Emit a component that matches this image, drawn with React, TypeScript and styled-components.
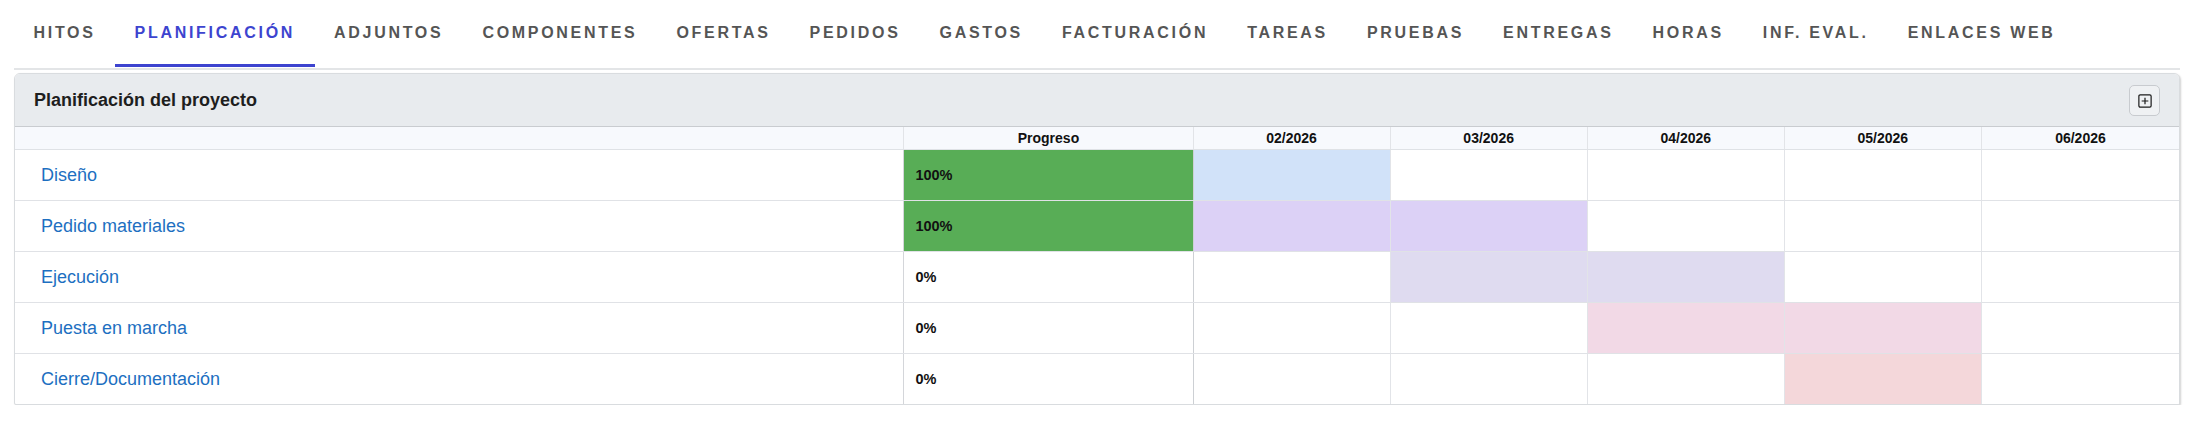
import React from "react";
import styled, { createGlobalStyle } from "styled-components";

const GlobalStyle = createGlobalStyle`
  *, *::before, *::after {
    box-sizing: border-box;
  }
  html, body {
    margin: 0;
    padding: 0;
    background: #ffffff;
    font-family: "Liberation Sans", Arial, sans-serif;
  }
`;

const TABS = [
  "Hitos",
  "Planificación",
  "Adjuntos",
  "Componentes",
  "Ofertas",
  "Pedidos",
  "Gastos",
  "Facturación",
  "Tareas",
  "Pruebas",
  "Entregas",
  "Horas",
  "Inf. Eval.",
  "Enlaces web",
];

const MONTHS = ["02/2026", "03/2026", "04/2026", "05/2026", "06/2026"];

interface Task {
  name: string;
  progress: number;
  start: number;
  end: number;
  color: string;
}

const TASKS: Task[] = [
  { name: "Diseño", progress: 100, start: 0, end: 0, color: "#d1e2f9" },
  { name: "Pedido materiales", progress: 100, start: 0, end: 1, color: "#dcd1f6" },
  { name: "Ejecución", progress: 0, start: 1, end: 2, color: "#dfdbf0" },
  { name: "Puesta en marcha", progress: 0, start: 2, end: 3, color: "#f2d9e6" },
  { name: "Cierre/Documentación", progress: 0, start: 3, end: 3, color: "#f4d7da" },
];

const COLUMNS = "889fr 289fr repeat(5, 197fr)";

const PlusSquare = () => (
  <svg width="14" height="14" viewBox="0 0 16 16" fill="none">
    <rect x="1" y="1" width="14" height="14" rx="1.5" stroke="#1d1d1d" strokeWidth="1.4" />
    <path d="M8 4.2v7.6M4.2 8h7.6" stroke="#1d1d1d" strokeWidth="1.4" />
  </svg>
);

const App = () => {
  return (
    <>
      <GlobalStyle />
      <Page>
        <TabBar>
          {TABS.map((t) => (
            <Tab key={t} $active={t === "Planificación"}>
              {t}
            </Tab>
          ))}
        </TabBar>

        <Card>
          <CardHeader>
            <CardTitle>Planificación del proyecto</CardTitle>
            <IconButton type="button" aria-label="Añadir">
              <PlusSquare />
            </IconButton>
          </CardHeader>

          <HeadRow>
            <HeadCell />
            <HeadCell>Progreso</HeadCell>
            {MONTHS.map((m) => (
              <HeadCell key={m}>{m}</HeadCell>
            ))}
          </HeadRow>

          {TASKS.map((task, i) => (
            <Row key={task.name} $last={i === TASKS.length - 1}>
              <NameCell>
                <TaskLink href="#">{task.name}</TaskLink>
              </NameCell>
              <ProgressCell $done={task.progress === 100}>{task.progress}%</ProgressCell>
              {MONTHS.map((m, idx) => (
                <MonthCell
                  key={m}
                  $color={idx >= task.start && idx <= task.end ? task.color : undefined}
                />
              ))}
            </Row>
          ))}
        </Card>
      </Page>
    </>
  );
};

const Page = styled.div`
  padding: 0 19px 0 14px;
`;

const TabBar = styled.nav`
  display: flex;
  border-bottom: 2px solid #e3e5e7;
`;

const Tab = styled.a<{ $active?: boolean }>`
  display: flex;
  align-items: center;
  height: 67px;
  padding: 1px 19.5px 0;
  border-bottom: 3px solid ${(p) => (p.$active ? "#3d44cf" : "transparent")};
  margin-bottom: 1px;
  font-size: 16px;
  font-weight: 700;
  letter-spacing: 2.7px;
  text-transform: uppercase;
  color: ${(p) => (p.$active ? "#3d44cf" : "#555555")};
  white-space: nowrap;
  cursor: pointer;
`;

const Card = styled.section`
  margin-top: 3px;
  border: 1px solid #d9dcdf;
  border-radius: 6px 6px 2px 2px;
  box-shadow: 1px 1px 2px rgba(0, 0, 0, 0.18);
  overflow: hidden;
  background: #ffffff;
`;

const CardHeader = styled.header`
  display: flex;
  align-items: center;
  justify-content: space-between;
  height: 53px;
  padding: 0 19px;
  background: #e8ebee;
  border-bottom: 1px solid #c9ccd0;
`;

const CardTitle = styled.h2`
  margin: 0;
  font-size: 18px;
  font-weight: 700;
  color: #1e1e1e;
`;

const IconButton = styled.button`
  display: flex;
  align-items: center;
  justify-content: center;
  width: 31px;
  height: 31px;
  padding: 0;
  margin-top: 1px;
  border: 1px solid #c8cbcf;
  border-radius: 5px;
  background: #eff1f3;
  cursor: pointer;
`;

const HeadRow = styled.div`
  display: grid;
  grid-template-columns: ${COLUMNS};
  height: 23px;
  background: #f7f9fd;
  border-bottom: 1px solid #dfe2e6;
`;

const HeadCell = styled.div`
  display: flex;
  align-items: center;
  justify-content: center;
  font-size: 14px;
  font-weight: 700;
  color: #111111;
  border-right: 1px solid #e2e4e8;

  &:last-child {
    border-right: none;
  }
`;

const Row = styled.div<{ $last?: boolean }>`
  display: grid;
  grid-template-columns: ${COLUMNS};
  height: ${(p) => (p.$last ? "50px" : "51px")};
  border-bottom: ${(p) => (p.$last ? "none" : "1px solid #e0e2e6")};
`;

const NameCell = styled.div`
  display: flex;
  align-items: center;
  padding-left: 26px;
  border-right: 1px solid #d4d6da;
`;

const TaskLink = styled.a`
  font-size: 18px;
  color: #1d6fc1;
  text-decoration: none;
`;

const ProgressCell = styled.div<{ $done?: boolean }>`
  display: flex;
  align-items: center;
  padding-left: 11px;
  font-size: 14.5px;
  font-weight: 700;
  color: #111111;
  background: ${(p) => (p.$done ? "#58ad56" : "#ffffff")};
  border-right: 1px solid #cdd0d4;
`;

const MonthCell = styled.div<{ $color?: string }>`
  background: ${(p) => p.$color ?? "#ffffff"};
  border-right: 1px solid #e2e4e8;

  &:last-child {
    border-right: none;
  }
`;

export default App;
